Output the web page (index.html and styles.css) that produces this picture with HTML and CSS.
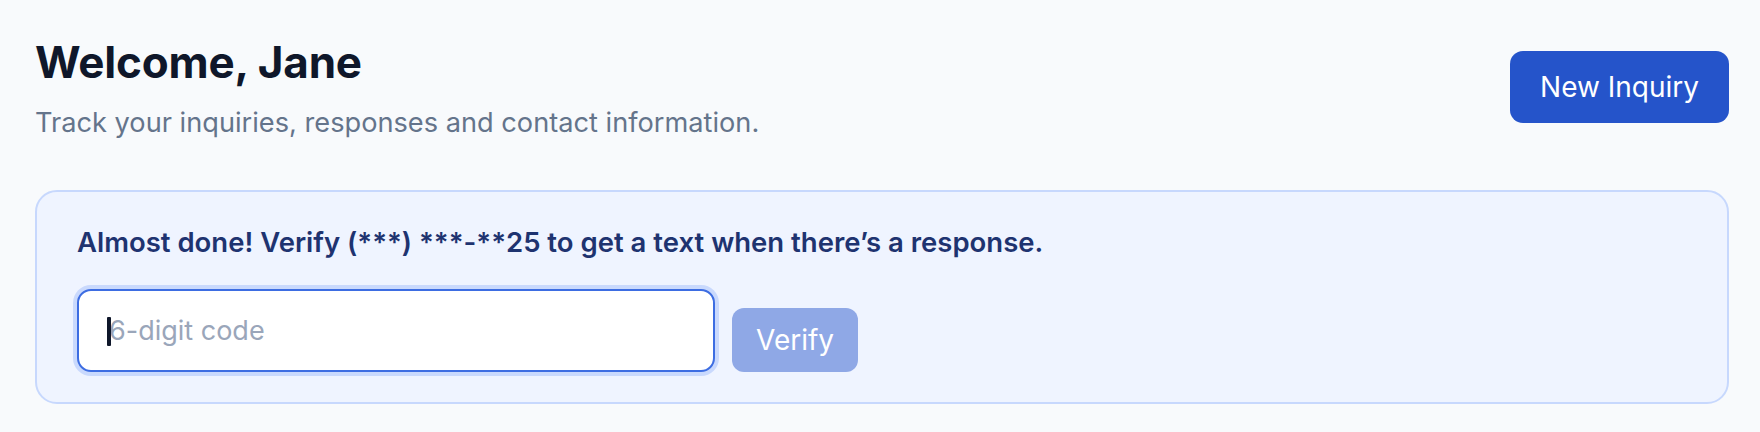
FILE: index.html
```html
<!DOCTYPE html>
<html lang="en">
<head>
<meta charset="utf-8">
<title>Dashboard</title>
<link rel="stylesheet" href="styles.css">
</head>
<body>
<main class="page">
  <header class="header">
    <div class="titles">
      <h1 class="title">Welcome, Jane</h1>
      <p class="subtitle">Track your inquiries, responses and contact information.</p>
    </div>
    <button class="btn-primary" type="button">New Inquiry</button>
  </header>
  <section class="verify-card">
    <p class="verify-text">Almost done! Verify (***) ***-**25 to get a text when there’s a response.</p>
    <form class="verify-form">
      <div class="code-field">
        <input class="code-input" type="text" placeholder="6-digit code" aria-label="6-digit code">
        <span class="caret"></span>
      </div>
      <button class="btn-verify" type="button" disabled>Verify</button>
    </form>
  </section>
</main>
</body>
</html>
```
FILE: styles.css
```css
* { box-sizing: border-box; }
html, body { margin: 0; padding: 0; }
body {
  background: #f8fafc;
  font-family: Inter, "Noto Sans", "Liberation Sans", sans-serif;
  width: 1760px;
  height: 432px;
  overflow: hidden;
}
.page {
  padding: 36px 31px 0 35px;
}
.header {
  display: flex;
  justify-content: space-between;
  align-items: flex-start;
}
.title {
  margin: 0;
  font-size: 44px;
  line-height: 53px;
  font-weight: 700;
  color: #0f172a;
  letter-spacing: -0.2px;
}
.subtitle {
  margin: 17px 0 0;
  font-size: 27.2px;
  line-height: 34px;
  color: #64748b;
}
.btn-primary {
  margin-top: 15px;
  height: 72px;
  padding: 0 30px;
  border: none;
  border-radius: 13px;
  background: #2554ca;
  color: #ffffff;
  font-family: inherit;
  font-size: 28px;
  font-weight: 400;
}
.verify-card {
  margin-top: 50px;
  border: 2px solid #c7d8fd;
  border-radius: 22px;
  background: #eff4ff;
  padding: 32px 40px 30px;
}
.verify-text {
  margin: 0;
  font-size: 27.5px;
  line-height: 36px;
  font-weight: 600;
  color: #1e3370;
}
.verify-form {
  margin-top: 29px;
  display: flex;
  align-items: flex-end;
  gap: 17px;
}
.code-field {
  position: relative;
  width: 638px;
  height: 83px;
}
.code-input {
  width: 100%;
  height: 100%;
  border: 2px solid #3d6de2;
  border-radius: 14px;
  background: #ffffff;
  box-shadow: 0 0 0 4px #c9d9fd;
  padding: 0 20px 0 30px;
  font-family: inherit;
  font-size: 27px;
  color: #0f172a;
  caret-color: transparent;
  outline: none;
}
.code-input::placeholder {
  color: #9aa6ba;
}
.caret {
  position: absolute;
  left: 30px;
  top: 28px;
  width: 4px;
  height: 29px;
  background: #0f172a;
  border-radius: 1px;
}
.btn-verify {
  height: 64px;
  padding: 0 24px;
  border: none;
  border-radius: 12px;
  background: #8fa8e6;
  color: #ffffff;
  font-family: inherit;
  font-size: 28px;
  font-weight: 400;
}
```
